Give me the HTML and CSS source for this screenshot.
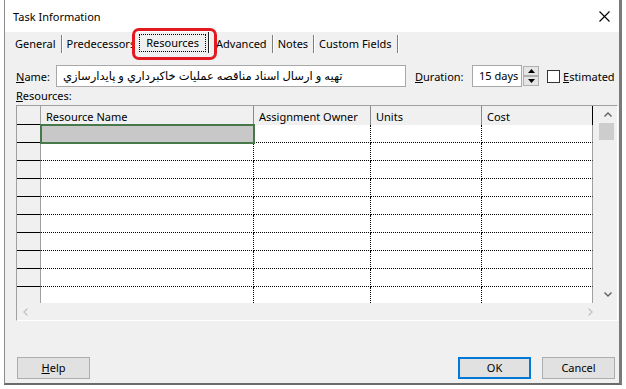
FILE: index.html
```html
<!DOCTYPE html>
<html>
<head>
<meta charset="utf-8">
<link rel="stylesheet" href="styles.css">
</head>
<body>
<div class="dialog">
  <div class="titlebar">
    <span class="title">Task Information</span>
    <svg class="close" width="11" height="11" viewBox="0 0 11 11"><path d="M0.5 0.5 L10.5 10.5 M10.5 0.5 L0.5 10.5" stroke="#000" stroke-width="1.1" fill="none"/></svg>
  </div>
  <div class="tabs">
    <span class="tab">General</span>
    <span class="tab tab-pred">Predecessors</span>
    <span class="tab active"><span class="focus">Resources</span><span class="highlight"></span></span>
    <span class="tab tab-adv">Advanced</span>
    <span class="tab">Notes</span>
    <span class="tab">Custom Fields</span>
  </div>
  <div class="panel">
    <div class="namerow">
      <span class="lbl-name"><u>N</u>ame:</span>
      <div class="name-input" dir="rtl">تهيه و ارسال اسناد مناقصه عمليات خاكبرداري و پايدارسازي</div>
      <span class="lbl-dur"><u>D</u>uration:</span>
      <div class="dur-input">15 days</div>
      <div class="spin">
        <div class="spin-btn"><svg width="7" height="4" viewBox="0 0 7 4"><path d="M0 4 L3.5 0 L7 4 Z" fill="#000"/></svg></div>
        <div class="spin-btn"><svg width="7" height="4" viewBox="0 0 7 4"><path d="M0 0 L3.5 4 L7 0 Z" fill="#000"/></svg></div>
      </div>
      <div class="check"></div>
      <span class="lbl-est"><u>E</u>stimated</span>
    </div>
    <div class="reslabel"><u>R</u>esources:</div>
    <div class="grid">
      <div class="gtop">
        <div class="table">
          <div class="hrow">
            <div class="corner"></div>
            <div class="hcell">Resource Name</div>
            <div class="hcell">Assignment Owner</div>
            <div class="hcell">Units</div>
            <div class="hcell last">Cost</div>
          </div>
          <div class="row"><div class="rh"></div><div class="cell sel"></div><div class="cell"></div><div class="cell"></div><div class="cell last"></div></div>
          <div class="row"><div class="rh"></div><div class="cell"></div><div class="cell"></div><div class="cell"></div><div class="cell last"></div></div>
          <div class="row"><div class="rh"></div><div class="cell"></div><div class="cell"></div><div class="cell"></div><div class="cell last"></div></div>
          <div class="row"><div class="rh"></div><div class="cell"></div><div class="cell"></div><div class="cell"></div><div class="cell last"></div></div>
          <div class="row"><div class="rh"></div><div class="cell"></div><div class="cell"></div><div class="cell"></div><div class="cell last"></div></div>
          <div class="row"><div class="rh"></div><div class="cell"></div><div class="cell"></div><div class="cell"></div><div class="cell last"></div></div>
          <div class="row"><div class="rh"></div><div class="cell"></div><div class="cell"></div><div class="cell"></div><div class="cell last"></div></div>
          <div class="row"><div class="rh"></div><div class="cell"></div><div class="cell"></div><div class="cell"></div><div class="cell last"></div></div>
          <div class="row"><div class="rh"></div><div class="cell"></div><div class="cell"></div><div class="cell"></div><div class="cell last"></div></div>
          <div class="row"><div class="rh"></div><div class="cell"></div><div class="cell"></div><div class="cell"></div><div class="cell last"></div></div>
        </div>
        <div class="vscroll">
          <div class="sbtn"><svg width="8" height="5" viewBox="0 0 8 5"><path d="M0.5 4.5 L4 1 L7.5 4.5" stroke="#606060" stroke-width="1.4" fill="none"/></svg></div>
          <div class="thumb"></div>
          <div class="track"></div>
          <div class="sbtn"><svg width="8" height="5" viewBox="0 0 8 5"><path d="M0.5 0.5 L4 4 L7.5 0.5" stroke="#606060" stroke-width="1.4" fill="none"/></svg></div>
        </div>
      </div>
      <div class="hscroll">
        <div class="hbtn"><svg width="5" height="8" viewBox="0 0 5 8"><path d="M4.5 0.5 L1 4 L4.5 7.5" stroke="#c4c4c4" stroke-width="1.4" fill="none"/></svg></div>
        <div class="hbtn"><svg width="5" height="8" viewBox="0 0 5 8"><path d="M0.5 0.5 L4 4 L0.5 7.5" stroke="#c4c4c4" stroke-width="1.4" fill="none"/></svg></div>
      </div>
    </div>
    <div class="buttons">
      <div class="btn help"><u>H</u>elp</div>
      <div class="btn-group">
        <div class="btn ok">OK</div>
        <div class="btn">Cancel</div>
      </div>
    </div>
  </div>
</div>
</body>
</html>
```
FILE: styles.css
```css
* { box-sizing: border-box; }
body {
  margin: 0;
  width: 626px;
  height: 389px;
  overflow: hidden;
  background: #fff;
  font-family: "Noto Sans", "DejaVu Sans", sans-serif;
  font-size: 11px;
  color: #000;
}
.dialog {
  margin-left: 4px;
  width: 618px;
  height: 385px;
  border-left: 1px solid #8c8c8c;
  border-right: 3px solid #7a7a7a;
  border-bottom: 2px solid #6a6a6a;
  background: #f0f0f0;
  display: flex;
  flex-direction: column;
}
.titlebar {
  height: 32px;
  flex: none;
  background: #fff;
  display: flex;
  align-items: center;
  justify-content: space-between;
  padding: 0 9px 0 8px;
}
.title { font-size: 11px; }
.tabs {
  height: 21px;
  flex: none;
  display: flex;
  align-items: flex-end;
  padding-left: 4px;
}
.tab {
  height: 18px;
  line-height: 17px;
  padding: 0 5px;
  border-right: 1px solid #7d7d7d;
  box-shadow: 1px 0 0 #fff;
  white-space: nowrap;
}
.tab:first-child { padding-left: 6px; }
.tab-pred { padding-right: 3px; }
.tab-adv { padding-left: 7px; }
.tab.active {
  position: relative;
  z-index: 2;
  height: 21px;
  margin-left: -4px;
  padding: 2px 2px 1px 4px;
  background: #f0f0f0;
  border-right: 1px solid #222;
}
.focus {
  display: block;
  height: 18px;
  line-height: 15px;
  border: 1px dotted #000;
  padding: 0 6px;
}
.highlight {
  position: absolute;
  left: -3px;
  right: -9px;
  top: -4px;
  bottom: -7px;
  border: 3px solid #e2191f;
  border-radius: 7px;
}
.panel {
  flex: 1;
  display: flex;
  flex-direction: column;
  padding: 12px 2px 0 11px;
}
.namerow {
  display: flex;
  align-items: center;
  height: 22px;
}
.lbl-name { width: 40px; }
.name-input {
  width: 350px;
  height: 22px;
  border: 1px solid #a8a8a8;
  background: #fff;
  padding-left: 6px;
  line-height: 20px;
  font-size: 11.5px;
  text-align: left;
  white-space: nowrap;
  overflow: hidden;
}
.lbl-dur { margin-left: 9px; width: 57px; }
.dur-input {
  width: 50px;
  height: 22px;
  border: 1px solid #a8a8a8;
  background: #fff;
  padding-left: 6px;
  line-height: 20px;
  white-space: nowrap;
}
.spin {
  margin-left: 1px;
  width: 16px;
  height: 20px;
  display: flex;
  flex-direction: column;
}
.spin-btn {
  flex: 1;
  background: #e5e5e5;
  border: 1px solid #b0b0b0;
  display: flex;
  align-items: center;
  justify-content: center;
}
.check {
  margin-left: 8px;
  width: 13px;
  height: 13px;
  border: 1px solid #333;
  background: #fff;
}
.lbl-est { margin-left: 3px; white-space: nowrap; }
.reslabel {
  height: 18px;
  line-height: 18px;
}
.grid {
  width: 602px;
  border-top: 1px solid #a0a0a0;
  border-left: 1px solid #a0a0a0;
  border-right: 1px solid #fff;
  border-bottom: 1px solid #fff;
}
.gtop {
  display: flex;
  height: 197px;
}
.table {
  width: 576px;
  overflow: hidden;
  background: #fff;
}
.hrow, .row {
  display: grid;
  grid-template-columns: 24px 213px 117px 111px 111px;
}
.hrow { height: 19px; }
.row { height: 18px; }
.corner {
  background: #f0f0f0;
  border-right: 1px solid #a0a0a0;
  border-bottom: 1px solid #000;
}
.hcell {
  background: #f0f0f0;
  border-right: 1px solid #8a8a8a;
  padding: 3px 0 0 5px;
  line-height: 16px;
  white-space: nowrap;
}
.hcell.last { border-right-color: #000; }
.rh {
  background: #f0f0f0;
  border-right: 1px solid #a0a0a0;
  border-bottom: 1px solid #000;
}
.cell {
  background: #fff;
  border-right: 1px dotted #000;
  border-bottom: 1px dotted #000;
}
.cell.last { border-right: 1px solid #a0a0a0; }
.cell.sel {
  background: #c8c8c8;
  outline: 2px solid #47784a;
  outline-offset: -1px;
  position: relative;
  z-index: 1;
}
.vscroll {
  width: 24px;
  background: #f0f0f0;
  padding-left: 6px;
  display: flex;
  flex-direction: column;
}
.sbtn {
  height: 17px;
  width: 17px;
  display: flex;
  align-items: center;
  justify-content: center;
}
.thumb {
  width: 15px;
  height: 17px;
  background: #cdcdcd;
}
.track { flex: 1; }
.hscroll {
  width: 582px;
  height: 17px;
  background: #f0f0f0;
  display: flex;
  justify-content: space-between;
}
.hbtn {
  width: 17px;
  height: 17px;
  display: flex;
  align-items: center;
  justify-content: center;
}
.buttons {
  margin-top: 36px;
  display: flex;
  justify-content: space-between;
}
.btn-group {
  display: flex;
  gap: 11px;
  margin-right: 2px;
}
.btn {
  width: 73px;
  height: 22px;
  border: 1px solid #adadad;
  background: #e1e1e1;
  line-height: 20px;
  text-align: center;
}
.btn.help { margin-left: 1px; }
.btn.ok {
  border: 2px solid #0078d7;
  line-height: 18px;
}
```
